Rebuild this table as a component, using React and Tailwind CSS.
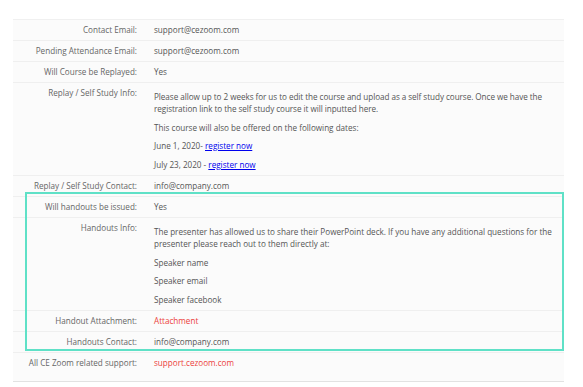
import React from "react";

const Row = ({ label, children, multi, last }) => (
  <div className={`flex ${last ? "" : "border-b border-[#efefef]"}`}>
    <div className="w-[124px] shrink-0 text-right py-[4px] text-[#666]">{label}</div>
    <div
      className={`flex-1 pl-[17px] text-[#555] ${
        multi ? "flex flex-col gap-[6.5px] pt-[8px] pb-[4.5px]" : "py-[4px]"
      }`}
    >
      {children}
    </div>
  </div>
);

export default function App() {
  return (
    <div className="w-[583px] h-[387px] bg-white pt-[19px] pl-[13px] font-['Open_Sans',sans-serif] text-[8.15px] leading-[12px]">
      <div className="relative w-[551px] bg-[#fbfbfb] border-t border-[#f0f0f0] border-b border-b-[#e2e2e2] pb-[8px]">
        <Row label="Contact Email:">support@cezoom.com</Row>
        <Row label="Pending Attendance Email:">support@cezoom.com</Row>
        <Row label="Will Course be Replayed:">Yes</Row>
        <Row label="Replay / Self Study Info:" multi>
          <p className="whitespace-nowrap tracking-[-0.05px]">
            Please allow up to 2 weeks for us to edit the course and upload as a self study course. Once we have the
            <br />
            registration link to the self study course it will inputted here.
          </p>
          <p>This course will also be offered on the following dates:</p>
          <p>
            June 1, 2020- <a href="#" className="text-[#0000ee] underline">register now</a>
          </p>
          <p>
            July 23, 2020 - <a href="#" className="text-[#0000ee] underline">register now</a>
          </p>
        </Row>
        <Row label="Replay / Self Study Contact:">info@company.com</Row>
        <Row label="Will handouts be issued:">Yes</Row>
        <Row label="Handouts Info:" multi>
          <p className="pr-[8px]">
            The presenter has allowed us to share their PowerPoint deck. If you have any additional questions for the
            presenter please reach out to them directly at:
          </p>
          <p>Speaker name</p>
          <p>Speaker email</p>
          <p>Speaker facebook</p>
        </Row>
        <Row label="Handout Attachment:">
          <span className="text-[#ec3f3b]">Attachment</span>
        </Row>
        <Row label="Handouts Contact:">info@company.com</Row>
        <Row label="All CE Zoom related support:" last>
          <span className="text-[#ec3f3b]">support.cezoom.com</span>
        </Row>

        {/* highlight box */}
        <div className="absolute left-[12px] right-0 top-[172px] h-[159px] border-2 border-[#5fe1c7] pointer-events-none" />
      </div>
    </div>
  );
}
